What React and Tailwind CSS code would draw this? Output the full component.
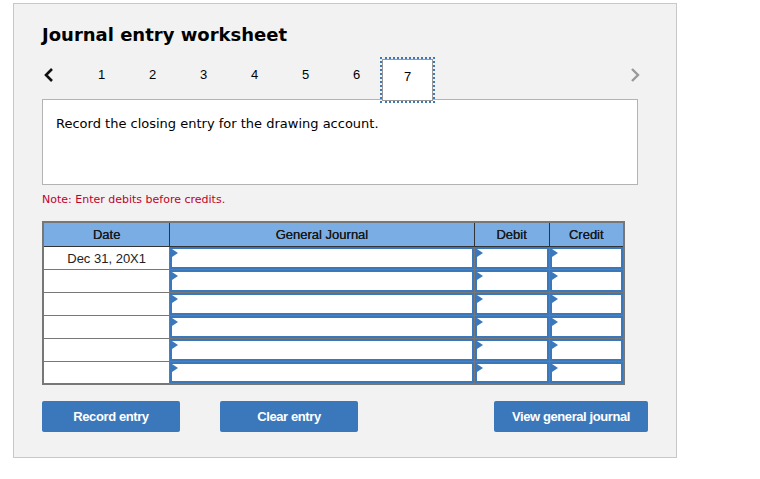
import React from "react";

const rows = ["Dec 31, 20X1", "", "", "", "", ""];
const steps = [1, 2, 3, 4, 5, 6, 7];

function InputCell() {
  return (
    <td className="border border-[#777] p-0 h-[23px]">
      <div className="relative h-full border-2 border-[#3b78bb] bg-white">
        <span className="absolute left-0 top-0 w-0 h-0 border-y-[4px] border-y-transparent border-l-[6px] border-l-[#3b78bb]" />
      </div>
    </td>
  );
}

function Button({ children, width }) {
  return (
    <button
      className={`h-[31px] rounded-[2px] bg-[#3b78bb] text-white text-[13px] font-bold tracking-[-0.4px] ${width}`}
      style={{ fontFamily: '"Liberation Sans Narrow", "Arial Narrow", "Liberation Sans", sans-serif' }}
    >
      {children}
    </button>
  );
}

export default function App() {
  return (
    <div className="bg-white w-[760px] h-[479px] pl-[13px] pt-[3px]">
      <div className="w-[664px] h-[455px] border border-[#c8c8c8] bg-[#f2f2f2] pl-[28px] pt-[20px]">
        <h1
          className="text-[18px] font-bold text-black leading-[22px]"
          style={{ fontFamily: '"DejaVu Sans", Verdana, sans-serif' }}
        >
          Journal entry worksheet
        </h1>

        {/* шаги */}
        <div
          className="mt-[13px] flex items-start w-[600px] h-[42px] relative z-10 -mb-[2px]"
          style={{ fontFamily: '"Liberation Sans", Arial, sans-serif' }}
        >
          <div className="w-[34px] h-[16px] mt-[8px] flex items-center pl-[2px]">
            <svg width="10" height="16" viewBox="0 0 10 16">
              <polyline points="8,2 2,8 8,14" fill="none" stroke="#111" strokeWidth="2.6" />
            </svg>
          </div>
          {steps.map((n) =>
            n === 7 ? (
              <div
                key={n}
                className="w-[51px] h-[42px] pt-[9px] text-center leading-[16px] bg-white border border-[#999] outline-dotted outline-2 outline-[#3b78bb] text-[13px] text-black"
              >
                {n}
              </div>
            ) : (
              <div key={n} className="w-[51px] mt-[8px] text-center leading-[16px] text-[13px] text-black">
                {n}
              </div>
            )
          )}
          <div className="flex-1 h-[16px] mt-[8px] flex items-center justify-end pr-[2px]">
            <svg width="10" height="16" viewBox="0 0 10 16">
              <polyline points="2,2 8,8 2,14" fill="none" stroke="#999" strokeWidth="2.4" />
            </svg>
          </div>
        </div>

        <div
          className="w-[596px] h-[86px] border border-[#b3b3b3] bg-white pl-[13px] pt-[14px] text-[13px] text-black"
          style={{ fontFamily: '"DejaVu Sans", Verdana, sans-serif' }}
        >
          Record the closing entry for the drawing account.
        </div>

        <p
          className="mt-[8px] text-[11px] leading-[14px] text-[#c0002a]"
          style={{ fontFamily: '"DejaVu Sans", Verdana, sans-serif' }}
        >
          Note: Enter debits before credits.
        </p>

        <table
          className="mt-[14px] w-[583px] border-collapse border-2 border-[#777] text-[13px]"
          style={{ fontFamily: '"Liberation Sans", Arial, sans-serif' }}
        >
          <thead>
            <tr className="bg-[#7aade3] h-[24px] text-[#1a1a1a]">
              <th className="w-[127px] border border-[#333] font-normal [text-shadow:0_0_0.6px_#111]">Date</th>
              <th className="w-[305px] border border-[#333] font-normal [text-shadow:0_0_0.6px_#111]">General Journal</th>
              <th className="w-[75px] border border-[#333] font-normal [text-shadow:0_0_0.6px_#111]">Debit</th>
              <th className="w-[75px] border border-[#333] font-normal [text-shadow:0_0_0.6px_#111]">Credit</th>
            </tr>
          </thead>
          <tbody>
            {rows.map((d, i) => (
              <tr key={i} className="h-[23px]">
                <td className="border border-[#777] bg-white text-center text-[#222] align-top pt-[2px]">{d}</td>
                <InputCell />
                <InputCell />
                <InputCell />
              </tr>
            ))}
          </tbody>
        </table>

        <div className="mt-[16px] flex w-[606px]">
          <Button width="w-[138px]">Record entry</Button>
          <div className="w-[40px]" />
          <Button width="w-[138px]">Clear entry</Button>
          <div className="flex-1" />
          <Button width="w-[154px]">View general journal</Button>
        </div>
      </div>
    </div>
  );
}
